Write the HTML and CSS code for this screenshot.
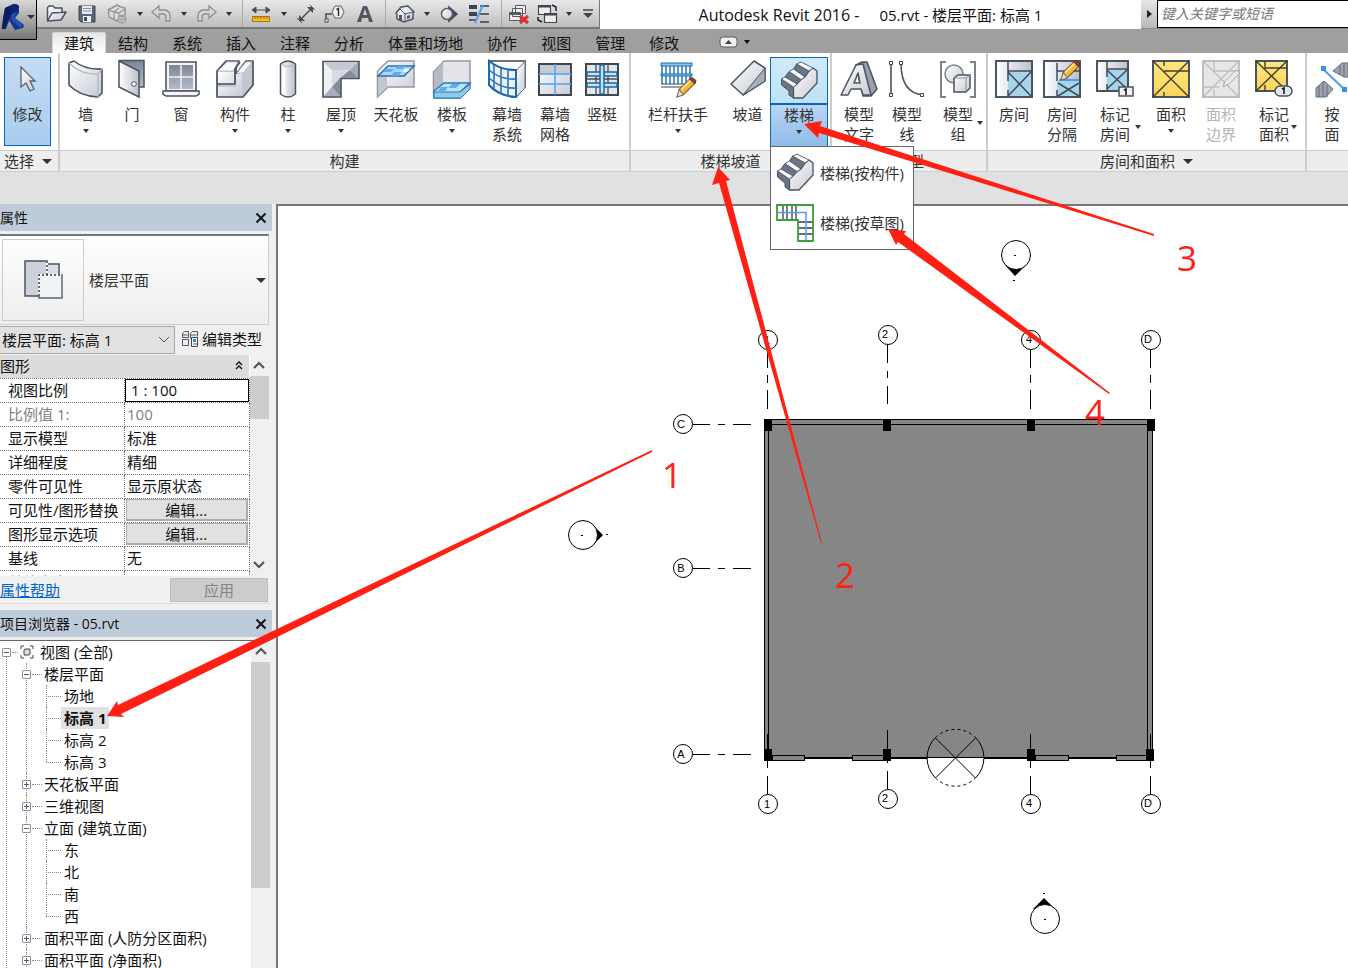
FILE: index.html
```html
<!DOCTYPE html>
<html lang="zh-CN">
<head>
<meta charset="utf-8">
<title>Autodesk Revit 2016 - 05.rvt</title>
<link rel="stylesheet" href="styles.css">
</head>
<body>
<svg class="defs" width="0" height="0" aria-hidden="true">
  <defs>
    <linearGradient id="g" x1="0" y1="0" x2="1" y2="1"><stop offset="0" stop-color="#ffffff"/><stop offset="1" stop-color="#c6cad2"/></linearGradient>
    <linearGradient id="gd" x1="0" y1="0" x2="0" y2="1"><stop offset="0" stop-color="#7d8698"/><stop offset="1" stop-color="#b4bac6"/></linearGradient>
    <linearGradient id="gl" x1="0" y1="0" x2="1" y2="0"><stop offset="0" stop-color="#ffffff"/><stop offset="1" stop-color="#bcc0ca"/></linearGradient>
    <linearGradient id="gy" x1="0" y1="0" x2="0" y2="1"><stop offset="0" stop-color="#ffe680"/><stop offset="1" stop-color="#fbd55c"/></linearGradient>
    <symbol id="stair" viewBox="0 0 40 40">
      <path d="M14.500 26l3.500-3 4-4.500 4-2.500 4-6 4-3 4 3v12L24 37h-9.500z" fill="url(#g)" stroke="#4a5361" stroke-width="1.300" stroke-linejoin="round"/>
      <path d="M2.500 18l12 8v11L10 34v-4l-7.500-6zM10 10.500l12 8-4 4.500-12-7zM17.700 3L30 10l-4 6-11.500-8z" fill="#6b7485" stroke="#4a5361" stroke-linejoin="round"/>
      <path d="M2.500 18L6 16l12 7-3.500 3zM10 10.500L14.500 8 26 16l-4 2.500zM17.700 3L22 1l12 6-4 3z" fill="#fafbfc" stroke="#5a6371" stroke-linejoin="round"/>
    </symbol>
    <symbol id="pencil" viewBox="0 0 20 20">
      <path d="M1 19l2-7L13 2l5 4L7 17z" fill="#f6b62c" stroke="#704c16"/><path d="M5 12L14 3" stroke="#ffe79a" stroke-width="2"/><path d="M13 2l2-1.500 4 3L18 6z" fill="#8d4d32" stroke="#633"/><path d="M1 19l2-7 4 5z" fill="#f3e6cf" stroke="#777"/>
    </symbol>
  </defs>
</svg>

<header class="titlebar">
  <div class="qat">
    <button class="qb" aria-label="打开"><svg width="22" height="18"><path d="M1.500 16V2.500L3 1h4l2 2h7v4M1.500 16L6 8l14-1-5 8z" fill="url(#g)" stroke="#4b5260" stroke-width="1.500" stroke-linejoin="round"/></svg></button>
    <button class="qb" aria-label="保存"><svg width="18" height="18"><path d="M1 1h16v16H3l-2-2z" fill="#59647a" stroke="#3d4556"/><path d="M4 1h10v8H4z" fill="#e8eaee"/><path d="M5 3.500h8M5 6h8" stroke="#8991a0"/><path d="M5 11h8v6H5z" fill="#f5f5f5"/><path d="M6 12h3v4H6z" fill="#3d4556"/></svg></button>
    <button class="qb" aria-label="同步"><svg width="22" height="20"><path d="M1.500 5.500L5 4l5-3 4 2 4 1v7l-4 4-4 2-8-4z" fill="#dcdcdc" stroke="#969696" stroke-width="1.500" stroke-linejoin="round"/><path d="M2 6l5 2 5-4M7 8v8M7 8l5 1 6-4M12 9v7" fill="none" stroke="#969696" stroke-width="1.300"/><circle cx="15" cy="15" r="4.500" fill="#9f9f9f"/><path d="M12 14h6M12 17h6" stroke="#ddd"/></svg></button>
    <button class="qb drop" aria-label="同步选项"><i></i></button>
    <button class="qb" aria-label="放弃"><svg width="22" height="18"><path d="M1 7l7-6v4h6q5 1 5 6v5h-4v-4q0-3-3-3H8v4z" fill="#d8d8d8" stroke="#8f8f8f" stroke-width="1.300"/></svg></button>
    <button class="qb drop" aria-label="放弃列表"><i></i></button>
    <button class="qb" aria-label="重做"><svg width="22" height="18"><path d="M20 7l-7-6v4H7q-5 1-5 6v5h4v-4q0-3 3-3h4v4z" fill="#d8d8d8" stroke="#8f8f8f" stroke-width="1.300"/></svg></button>
    <button class="qb drop" aria-label="重做列表"><i></i></button>
    <span class="sep"></span>
    <button class="qb" aria-label="测量"><svg width="20" height="18"><path d="M2 5h16M5 2L1 5l4 3zM15 2l4 3-4 3z" fill="#444c59" stroke="#444c59"/><rect x="1.500" y="11.500" width="17" height="5" fill="#f6bd2b" stroke="#a87518"/><path d="M4 12v2m3-2v2m3-2v2m3-2v2m3-2v2" stroke="#8a5c10"/></svg></button>
    <button class="qb drop" aria-label="测量选项"><i></i></button>
    <button class="qb" aria-label="尺寸标注"><svg width="20" height="20"><path d="M4 16L16 4" stroke="#444c59" stroke-width="1.500"/><path d="M3 17v-6l6 6zM17 3v6l-6-6z" fill="#444c59"/><path d="M1 14l5 5M14 1l5 5" stroke="#444c59"/></svg></button>
    <button class="qb" aria-label="标记"><svg width="22" height="18"><path d="M2 16V9h6" fill="none" stroke="#444c59" stroke-width="1.500"/><rect x="1" y="14" width="3" height="3" fill="#fff" stroke="#444c59"/><path d="M8 7l3-6h6l3 6-3 6h-6z" fill="#f2f2f2" stroke="#59616e"/><path d="M12.500 4.500l2-1V11" fill="none" stroke="#333" stroke-width="1.500"/></svg></button>
    <button class="qb" aria-label="文字"><svg width="18" height="18"><path d="M1 17L7 1h4l6 16h-4l-1-4H6l-1 4zM7 10h4L9 4z" fill="#505661"/></svg></button>
    <span class="sep"></span>
    <button class="qb" aria-label="默认三维视图"><svg width="22" height="18"><path d="M2 8l5-6 7-1 6 6-1 1v6l-9 3-7-3V9z" fill="url(#g)" stroke="#505762" stroke-width="1.500"/><path d="M2 8l4-4 5 5v8M11 9l8-2M7 2l7-1" fill="none" stroke="#505762"/><path d="M5 10h3v6l-3-1zM13 11l3-1v3l-3 1z" fill="#505762"/></svg></button>
    <button class="qb drop" aria-label="三维视图选项"><i></i></button>
    <button class="qb" aria-label="剖面"><svg width="20" height="18"><path d="M10 2l8 7-8 7z" fill="#444c59" stroke="#444c59" stroke-width="1.500"/><circle cx="8" cy="9" r="5.500" fill="url(#g)" stroke="#59616e" stroke-width="1.500"/></svg></button>
    <button class="qb" aria-label="细线"><svg width="22" height="20"><path d="M1 3h8M1 10h8" stroke="#3f4550" stroke-width="4"/><path d="M1 16h8M12 2h9M12 10h9M12 18h9" stroke="#59616e" stroke-width="2"/><path d="M7 19L15 1" stroke="#4da0f5" stroke-width="2"/></svg></button>
    <span class="sep"></span>
    <button class="qb" aria-label="关闭隐藏窗口"><svg width="22" height="22"><path d="M7.500 2.500h10v8h-10zM4.500 5.500h10v8h-10zM1.500 9.500h11v8h-11z" fill="#eee" stroke="#555d6a"/><path d="M2 11h10" stroke="#555d6a" stroke-width="2"/><path d="M12 13l8 7m0-7l-8 7" stroke="#d9302c" stroke-width="3"/></svg></button>
    <button class="qb" aria-label="切换窗口"><svg width="22" height="20"><path d="M1.500 1.500h12v9h-12zM7.500 9.500h12v9h-12z" fill="#eee" stroke="#3f4652" stroke-width="1.200"/><path d="M2 2.500h11M8 10.500h11" stroke="#3f4652" stroke-width="2"/><path d="M15 1l4 2v4M1 13v3l4 2" fill="none" stroke="#222" stroke-width="1.500"/></svg></button>
    <button class="qb drop" aria-label="窗口列表"><i></i></button>
    <button class="qb" aria-label="自定义快速访问工具栏"><svg width="12" height="12"><path d="M1 2h10" stroke="#444" stroke-width="1.500"/><path d="M1 5h10l-5 5z" fill="#444"/></svg></button>
  </div>
  <h1 class="title"><span class="app-name">Autodesk Revit 2016 -</span><span>05.rvt - 楼层平面: 标高 1</span></h1>
  <form class="search">
    <button type="button" class="search-toggle" aria-label="展开搜索"><i></i></button>
    <input type="text" placeholder="键入关键字或短语" aria-label="搜索">
  </form>
  <button class="appbtn" aria-label="应用程序菜单"><svg width="24" height="28"><path d="M4 5l8-4h3l3 2v7l-4 5 9 7-1 3-8 2-5-8-1-1-3 8H1l1-10z" fill="#15368f"/><path d="M4 5l5-2 2 8-4 6-3 9H1l1-10z" fill="#081e5c"/><path d="M11 10l6-3-4 7 9 8-3 3-9-9z" fill="#2450b4"/><path d="M9 3l6-2 3 2-1 5-6 3z" fill="#0c2672"/></svg><i></i></button>
</header>

<nav class="tabs">
  <button class="tab active">建筑</button><button class="tab">结构</button><button class="tab">系统</button><button class="tab">插入</button><button class="tab">注释</button><button class="tab">分析</button><button class="tab">体量和场地</button><button class="tab">协作</button><button class="tab">视图</button><button class="tab">管理</button><button class="tab">修改</button>
  <button class="minimize" aria-label="最小化功能区"><svg width="32" height="13"><rect x="1" y="1" width="17" height="10" rx="3" fill="#f1f1f1" stroke="#545b66"/><path d="M6 8l3.500-4L13 8z" fill="#444"/><path d="M25 4h6l-3 4z" fill="#111"/></svg></button>
</nav>

<section class="ribbon">
  <div class="group g-select">
    <div class="tools">
      <button class="tool selected"><svg class="ic" viewBox="0 0 40 40"><path d="M13 8v20l5-4 4 8 4-2-4-8h5z" fill="url(#g)" stroke="#59616e" stroke-width="1.300"/></svg><span>修改</span></button>
    </div>
    <div class="caption">选择<i></i></div>
  </div>
  <div class="group g-build">
    <div class="tools">
      <button class="tool"><svg class="ic" viewBox="0 0 40 40"><path d="M3 4l5-2q11 9 28 8v24l-4 4Q13 37 3 26z" fill="url(#g)" stroke="#4a5361" stroke-width="1.600" stroke-linejoin="round"/><path d="M3 4q12 12 29 11l4-5M32 15v23" fill="none" stroke="#b5b9c2" stroke-width="1.500"/></svg><span>墙</span><i></i></button>
      <button class="tool"><svg class="ic" viewBox="0 0 40 40"><path d="M7 1.500h25V28h-5" fill="url(#gd)" stroke="#4a5361" stroke-width="1.500"/><path d="M7 2l20 10v26L7 28z" fill="url(#gl)" stroke="#4a5361" stroke-width="1.500"/><circle cx="22" cy="25" r="2.300" fill="#fff" stroke="#4a5361"/></svg><span>门</span></button>
      <button class="tool"><svg class="ic" viewBox="0 0 40 40"><path d="M5 3h30v29H5z" fill="#f4f5f7" stroke="#4a5361" stroke-width="1.600"/><path d="M8 6h24v24H8z" fill="url(#gd)"/><path d="M20 6v24M8 18h24" stroke="#eef0f4" stroke-width="1.500"/><path d="M2 32h36v3l-3 2H5l-3-2z" fill="#f6f6f8" stroke="#4a5361" stroke-width="1.500"/></svg><span>窗</span></button>
      <button class="tool"><svg class="ic" viewBox="0 0 40 40"><path d="M2 12l9-10h13l-3 4v8h1L31 2h7v24L28 38H2z" fill="#c3c7cf" stroke="#4a5361" stroke-width="1.700" stroke-linejoin="round"/><path d="M3 13h16v11H3zM3 28h18V15h6v22H3z" fill="url(#g)"/><path d="M3 12l9-9h11l-5 9zM22 14l9-11h6l-9 11z" fill="#fafafa" stroke="#c2c6ce"/><path d="M25 3l-5 7v15H2" fill="none" stroke="#4a5361" stroke-width="1.700"/></svg><span>构件</span><i></i></button>
      <button class="tool"><svg class="ic" viewBox="0 0 40 40"><path d="M12.500 5q7.500-6 15 0v30q-7.500 6-15 0z" fill="url(#gl)" stroke="#4a5361" stroke-width="1.500"/><path d="M13 5q7 5 14 0" fill="none" stroke="#aeb3bd"/><path d="M16 9v27" stroke="#fff" stroke-width="3"/></svg><span>柱</span><i></i></button>
      <button class="tool"><svg class="ic" viewBox="0 0 40 40"><path d="M2 2.500h36v17H20V38H2z" fill="#b3b8c3" stroke="#4a5361" stroke-width="1.600"/><path d="M3 3l8 8v17l-8 9z" fill="#eef0f3"/><path d="M3 3h34l-8 8H11z" fill="#c5c9d2"/><path d="M11 28V11h18l8 8H19v18z" fill="#858d9d"/><path d="M37 4v14l-8-7z" fill="#a3aab7"/><path d="M11 28V11h18l-10 8z" fill="#d8dbe1"/><path d="M3 37l8-9 8 9z" fill="#a8aebb"/></svg><span>屋顶</span><i></i></button>
      <button class="tool"><svg class="ic" viewBox="0 0 40 40"><path d="M1.500 12L12 2h26v26H12L1.500 38z" fill="url(#g)" stroke="#9298a2" stroke-width="1.500"/><path d="M2 17l9-10v21L2 37z" fill="#c2c6ce"/><path d="M2 17L12 7h26L28 17z" fill="#a9d5f7" stroke="#2d70af" stroke-width="1.500"/><path d="M10 10h8l-3 3H7zM22 7h8l-3 3h-8zM18 13h8l-4 4h-7z" fill="#5cabf5"/><path d="M29 10h5l-3 3h-5z" fill="#eef8ff"/></svg><span>天花板</span></button>
      <button class="tool"><svg class="ic" viewBox="0 0 40 40"><path d="M1.500 32V13L12 2h26v25L28 38H2z" fill="#e2e4e9" stroke="#9298a2" stroke-width="1.500"/><path d="M2 13L11 3v22L2 33z" fill="#b4bac6"/><path d="M2 32l10-8h26L28 33v6H2z" fill="#bde3f7" stroke="#2878b6" stroke-width="1.500"/><path d="M2 33h26l10-8v5l-9 9H2z" fill="#8ccce9" stroke="#2878b6"/><path d="M9 28h7l-3 4H6zM20 25h8l-4 4h-8z" fill="#5cabf5"/></svg><span>楼板</span><i></i></button>
      <button class="tool"><svg class="ic" viewBox="0 0 40 40"><path d="M2 2h36v26l-9 10Q12 37 2 26z" fill="#fff" stroke="#3e4653" stroke-width="1.600"/><path d="M29 12l9-10v27l-9 9z" fill="url(#g)" stroke="#697180"/><path d="M2 2q11 9 27 9v27Q12 37 2 26z" fill="#eaf3fa" stroke="#1f67aa" stroke-width="2"/><path d="M7 6v26M14 9v26M21 11v26M2 11q12 10 27 9M2 19q12 11 27 10" fill="none" stroke="#2b75b8" stroke-width="1.600"/></svg><span>幕墙<br>系统</span></button>
      <button class="tool"><svg class="ic" viewBox="0 0 40 40"><path d="M4 5h32v31H4z" fill="url(#g)" stroke="#3e4653" stroke-width="2"/><path d="M5 6h30v9H5z" fill="#c7cad1"/><path d="M20 5v31M4 15h32M4 25h32" stroke="#4da3f5" stroke-width="1.500"/></svg><span>幕墙<br>网格</span></button>
      <button class="tool"><svg class="ic" viewBox="0 0 40 40"><path d="M4 5h32v31H4z" fill="#e5e6e9" stroke="#3e4653" stroke-width="2"/><path d="M14 5v31M26 5v31M4 20h32" stroke="#454d5a" stroke-width="1.300"/><path d="M5 13h30v4H5zM5 24h30v4H5z" fill="#bfe5f7" stroke="#1f67a0" stroke-width="1.500"/><path d="M18 6h4v29h-4z" fill="#bfe5f7" stroke="#1f67a0" stroke-width="1.500"/></svg><span>竖梃</span></button>
    </div>
    <div class="caption">构建</div>
  </div>
  <div class="group g-stair">
    <div class="tools">
      <button class="tool"><svg class="ic" viewBox="0 0 40 40"><path d="M3 28h30M3 25h30" stroke="#7b818b" stroke-width="1.500"/><path d="M4 7v18M8 7v18M12 7v18M16 7v18M20 7v18M24 7v18M28 7v18M32 7v18" stroke="#2a74b8" stroke-width="1.500"/><path d="M3 4h31v3H3zM3 15h31v2H3z" fill="#8bc7ee" stroke="#1d66a9"/><use href="#pencil" x="18" y="18" width="21" height="21"/></svg><span>栏杆扶手</span><i></i></button>
      <button class="tool"><svg class="ic" viewBox="0 0 40 40"><path d="M3 25L26 2l11 7v13L15 36z" fill="url(#g)" stroke="#4a5361" stroke-width="1.500" stroke-linejoin="round"/><path d="M37 9v13L15 36z" fill="#a9afba" stroke="#4a5361" stroke-linejoin="round"/></svg><span>坡道</span></button>
      <div class="split">
        <button class="split-top" aria-label="楼梯(按构件)"><svg class="ic"><use href="#stair"/></svg></button>
        <button class="split-bottom"><span>楼梯</span><i></i></button>
        <div class="menu" role="menu">
          <button role="menuitem"><svg class="ic"><use href="#stair"/></svg>楼梯(按构件)</button>
          <button role="menuitem"><svg class="ic" viewBox="0 0 40 40"><path d="M2 2h36v36H23V17H2z" fill="#fff"/><path d="M8 2v15M12 2v15M17 2v15M21 2v15M23 19h15M23 25h15M23 31h15" stroke="#333b48" stroke-width="1.300"/><path d="M3 9.500h28V37" fill="none" stroke="#4a9ef2" stroke-width="1.500"/><path d="M2 2h36v36H23V17H2z" fill="none" stroke="#3c9f34" stroke-width="1.800"/></svg>楼梯(按草图)</button>
        </div>
      </div>
    </div>
    <div class="caption">楼梯坡道</div>
  </div>
  <div class="group g-model">
    <div class="tools">
      <button class="tool"><svg class="ic" viewBox="0 0 40 40"><path d="M17 6l6-3h5l10 27-6 7h-8z" fill="#989fae" stroke="#4a5361" stroke-width="1.500" stroke-linejoin="round"/><path d="M2 36L17 6l7-1 8 31h-8l-2-6H12l-3 6zM15 24h6l-2-10z" fill="url(#g)" fill-rule="evenodd" stroke="#4a5361" stroke-width="1.500" stroke-linejoin="round"/></svg><span>模型<br>文字</span></button>
      <button class="tool"><svg class="ic" viewBox="0 0 40 40"><path d="M4 4v31M14 4q0 30 22 32" fill="none" stroke="#4a5361" stroke-width="1.600"/><path d="M2.500 2.500h3v3h-3zM2.500 34.500h3v3h-3zM12.500 2.500h3v3h-3zM33.500 34.500h3v3h-3z" fill="#fff" stroke="#3c434e"/></svg><span>模型<br>线</span></button>
      <button class="tool flyout group-tool"><svg class="ic" viewBox="0 0 40 40"><path d="M8 3H3v35h5M32 3h5v35h-5" fill="none" stroke="#7b828d" stroke-width="2"/><circle cx="16" cy="15" r="9" fill="url(#g)" stroke="#7b828d" stroke-width="1.500"/><path d="M16 19l4-3h12v13l-4 4H16z" fill="url(#g)" stroke="#4a5361" stroke-width="1.500"/><path d="M16 19h12l4-3M28 19v14" fill="none" stroke="#858c98"/></svg><span>模型<br>组</span><i></i></button>
    </div>
    <div class="caption">模型</div>
  </div>
  <div class="group g-room">
    <div class="tools">
      <button class="tool"><svg class="ic" viewBox="0 0 40 40"><path d="M2 2h36v36H2z" fill="url(#gl)" stroke="#4a5361" stroke-width="2"/><path d="M14 13h23v24H14z" fill="#a6d4e8"/><path d="M14 13l23 24M37 13L14 37M14 2v20M14 31v6M14 12h24" stroke="#3f4b59" stroke-width="1.500"/></svg><span>房间</span></button>
      <button class="tool"><svg class="ic" viewBox="0 0 40 40"><path d="M2 2h36v36H2z" fill="url(#gl)" stroke="#4a5361" stroke-width="2"/><path d="M15 22h22v15H15z" fill="#a6d4e8"/><path d="M16 24l21 13M37 24L16 37M15 4v18M15 31v6M15 12h23" stroke="#3f4b59" stroke-width="1.500"/><path d="M17 21h20" stroke="#4b9ff0" stroke-width="2"/><use href="#pencil" x="18" y="1" width="21" height="21"/></svg><span>房间<br>分隔</span></button>
      <button class="tool flyout"><svg class="ic" viewBox="0 0 40 40"><path d="M2 2h31v30H2z" fill="url(#gl)" stroke="#4a5361" stroke-width="2"/><path d="M12 11h20v20H12z" fill="#a6d4e8"/><path d="M12 11l20 19M32 11L12 30M12 2v16M12 25v6M12 10h20" stroke="#3f4b59" stroke-width="1.500"/><path d="M24 28h14v9H24z" fill="#f1f2f4" stroke="#4a5361" stroke-width="1.500"/><path d="M29 31l2-1v6" fill="none" stroke="#111" stroke-width="1.500"/></svg><span>标记<br>房间</span><i></i></button>
      <button class="tool"><svg class="ic" viewBox="0 0 40 40"><path d="M2 2h36v36H2z" fill="url(#gy)" stroke="#4a5361" stroke-width="2"/><path d="M2 2l36 36M38 2L2 38M13 2v5M13 12h25M13 33v5" stroke="#463f2c" stroke-width="1.400"/></svg><span>面积</span><i></i></button>
      <button class="tool" disabled><svg class="ic" viewBox="0 0 40 40"><path d="M2 2h36v36H2z" fill="#e7e7e7" stroke="#bebebe" stroke-width="2"/><path d="M2 2l36 36M38 2L2 38M13 2v10h25M13 30v8M2 28h16" stroke="#bdbdbd" stroke-width="1.300" fill="none"/><path d="M22 28l2-6 11-11 4 3-11 11z" fill="#e8e8e8" stroke="#aaa"/></svg><span>面积<br>边界</span></button>
      <button class="tool flyout"><svg class="ic" viewBox="0 0 40 40"><path d="M2 2h31v30H2z" fill="url(#gy)" stroke="#4a5361" stroke-width="2"/><path d="M2 2l31 30M33 2L2 32M11 2v7h22M11 26v6" fill="none" stroke="#463f2c" stroke-width="1.400"/><rect x="21" y="27" width="17" height="10" rx="5" fill="#e5e6ea" stroke="#4a5361" stroke-width="1.500"/><path d="M28 30l2-1v6" fill="none" stroke="#111" stroke-width="1.500"/></svg><span>标记<br>面积</span><i></i></button>
    </div>
    <div class="caption">房间和面积<i></i></div>
  </div>
  <div class="group g-open">
    <div class="tools">
      <button class="tool"><svg class="ic" viewBox="0 0 40 40"><path d="M4 38V29l8-7 9 8-7 8zM21 12l9-8h10v14h-8z" fill="#a0a4ad" stroke="#646b78"/><path d="M7 27v11M11 23v15M15 26v12M28 7v9M32 5v12M36 5v12" stroke="#646b78"/><path d="M11 10l21 20" stroke="#4b9ff0" stroke-width="2"/><path d="M9 7h5v5H9zM30 28h5v5h-5z" fill="#3c8bea"/></svg><span>按<br>面</span></button>
    </div>
    <div class="caption"></div>
  </div>
</section>
<div class="options"></div>

<main class="work">
  <aside class="side">
    <section class="props">
      <h2 class="pane-title">属性<button aria-label="关闭属性"><svg width="12" height="12"><path d="M1.500 1.500l9 9M10.500 1.500l-9 9" stroke="#111" stroke-width="2"/></svg></button></h2>
      <button class="type">
        <span class="thumb"><svg width="42" height="42"><path d="M3 2h22v35H3z" fill="#cdd1da" stroke="#4a5361" stroke-width="1.500"/><path d="M25 5h12v12H25z" fill="#dcdfe5" stroke="#4a5361" stroke-width="1.500"/><path d="M17 16h23v23H17z" fill="#f1f3f5" stroke="#606875" stroke-width="1.500"/><path d="M17 37V16h22M25 16V3" fill="none" stroke="#fff" stroke-width="2"/><path d="M17 37V16h22M25 16V3" fill="none" stroke="#303844" stroke-width="1.500" stroke-dasharray="2 2"/></svg></span>
        <span class="type-name">楼层平面</span><i></i>
      </button>
      <div class="instance">
        <div class="combo"><select aria-label="实例"><option>楼层平面: 标高 1</option></select><svg width="12" height="8"><path d="M1 1l5 5 5-5" fill="none" stroke="#555"/></svg></div>
        <button class="edit-type"><svg width="18" height="18"><path d="M1.500 3.500l2-2h4v6h-6zM9.500 3.500l2-2h5v5M1.500 9.500h6v6h-6zM9.500 3.500v5M1.500 5h5M9.500 5h6" fill="none" stroke="#505967"/><path d="M10.500 7.500h6v9h-6z" fill="#fff" stroke="#3f4652"/><path d="M12 9h3v3h-3z" fill="#3483d8"/><path d="M12 14h4" stroke="#555"/></svg>编辑类型</button>
      </div>
      <div class="grid-wrap">
        <table class="grid">
          <thead><tr><th colspan="2"><div class="cat">图形<svg width="8" height="10"><path d="M1 4l3-3 3 3M1 8l3-3 3 3" fill="none" stroke="#111" stroke-width="1.300"/></svg></div></th></tr></thead>
          <tbody>
            <tr><td><label for="scale">视图比例</label></td><td class="editing"><input id="scale" value="1 : 100"></td></tr>
            <tr class="off"><td>比例值 1:</td><td>100</td></tr>
            <tr><td>显示模型</td><td>标准</td></tr>
            <tr><td>详细程度</td><td>精细</td></tr>
            <tr><td>零件可见性</td><td>显示原状态</td></tr>
            <tr><td>可见性/图形替换</td><td class="cellbtn"><button>编辑...</button></td></tr>
            <tr><td>图形显示选项</td><td class="cellbtn"><button>编辑...</button></td></tr>
            <tr><td>基线</td><td>无</td></tr>
            <tr class="off"><td>基线方向</td><td>平面</td></tr>
          </tbody>
        </table>
        <div class="scroll"><svg width="12" height="8"><path d="M1 7l5-5 5 5" fill="none" stroke="#505050" stroke-width="2"/></svg><b class="knob-s"></b><svg width="12" height="8"><path d="M1 1l5 5 5-5" fill="none" stroke="#505050" stroke-width="2"/></svg></div>
      </div>
      <div class="props-foot"><a href="#">属性帮助</a><button disabled>应用</button></div>
    </section>
    <section class="browser">
      <h2 class="pane-title">项目浏览器 - 05.rvt<button aria-label="关闭项目浏览器"><svg width="12" height="12"><path d="M1.500 1.500l9 9M10.500 1.500l-9 9" stroke="#111" stroke-width="2"/></svg></button></h2>
      <div class="tree-wrap">
        <ul class="tree root">
          <li><div class="node"><b class="ex"></b><s></s><svg width="14" height="14"><path d="M4 1H1v3M10 1h3v3M1 10v3h3M13 10v3h-3" fill="none" stroke="#444"/><path d="M4 5l1-1h5v5l-1 1H4z" fill="#ddd" stroke="#444"/></svg><span class="top-label">视图 (全部)</span></div>
            <ul class="lv1">
              <li><div class="node"><b class="ex"></b><s></s><span>楼层平面</span></div>
                <ul class="lv2"><li><div class="node"><s></s><span>场地</span></div></li><li><div class="node"><s></s><span class="cur">标高 1</span></div></li><li><div class="node"><s></s><span>标高 2</span></div></li><li><div class="node"><s></s><span>标高 3</span></div></li></ul></li>
              <li><div class="node"><b class="ex plus"></b><s></s><span>天花板平面</span></div></li>
              <li><div class="node"><b class="ex plus"></b><s></s><span>三维视图</span></div></li>
              <li><div class="node"><b class="ex"></b><s></s><span>立面 (建筑立面)</span></div>
                <ul class="lv2"><li><div class="node"><s></s><span>东</span></div></li><li><div class="node"><s></s><span>北</span></div></li><li><div class="node"><s></s><span>南</span></div></li><li><div class="node"><s></s><span>西</span></div></li></ul></li>
              <li><div class="node"><b class="ex plus"></b><s></s><span>面积平面 (人防分区面积)</span></div></li>
              <li><div class="node"><b class="ex plus"></b><s></s><span>面积平面 (净面积)</span></div></li>
            </ul></li>
        </ul>
        <div class="scroll"><svg width="12" height="8"><path d="M1 7l5-5 5 5" fill="none" stroke="#505050" stroke-width="2"/></svg><b class="knob-l"></b></div>
      </div>
    </section>
  </aside>
  <div class="canvas">
    <svg class="plan" viewBox="278 206 1070 762" width="1070" height="762" role="img" aria-label="标高 1 楼层平面图">
      <g shape-rendering="crispEdges">
        <path d="M764 419h389v339H764z" fill="#868686"/>
        <path d="M764.500 758V419.500h388V758M768.500 758V424.500h379V758" fill="none" stroke="#000"/>
        <path d="M764 758h389" stroke="#000" stroke-width="2"/>
        <path d="M772.500 755.500h32v5h-32zM852.500 755.500h32v5h-32zM1035.500 755.500h33v5h-33zM1116.500 755.500h32v5h-32z" fill="#868686" stroke="#000"/>
        <path d="M764 419h8v12h-8zM883 419h8v12h-8zM1027 419h8v12h-8zM1147 419h8v12h-8zM764 749h8v12h-8zM883 749h8v12h-8zM1027 749h8v12h-8zM1146 749h8v12h-8z"/>
        <path d="M767.500 350v18m0 7v8m0 7v19M887.500 345v18m0 8v7m0 8v18M1030.500 350v18m0 7v8m0 7v19M1150.500 350v18m0 7v8m0 7v19M693 424.500h17m8 0h7m8 0h18M693 568.500h17m8 0h7m8 0h18M693 754.500h17m8 0h7m8 0h18M767.500 734v34m0 8v18M887.500 730v33m0 8v18M1030.500 734v34m0 8v18M1150.500 734v34m0 8v18" stroke="#000"/>
      </g>
      <path d="M927 758a28.500 28.500 0 0 0 57 0z" fill="#fff"/>
      <path d="M935.500 738l40 40M975.500 738l-40 40M927 757.500h57M935.500 737.500a28.500 28.500 0 0 0 0 40.500M975.500 737.500a28.500 28.500 0 0 1 0 40.500" fill="none" stroke="#000"/>
      <path d="M935.500 737.500a28.500 28.500 0 0 1 40 0M935.500 778a28.500 28.500 0 0 0 40 0" fill="none" stroke="#000" stroke-dasharray="3 3"/>
      <g fill="#fff" stroke="#000">
        <circle cx="768" cy="340" r="9.500"/><circle cx="888" cy="335" r="9.500"/><circle cx="1031" cy="340" r="9.500"/><circle cx="1151" cy="340" r="9.500"/>
        <circle cx="683" cy="424" r="9.500"/><circle cx="683" cy="568" r="9.500"/><circle cx="683" cy="754" r="9.500"/>
        <circle cx="768" cy="804" r="9.500"/><circle cx="888" cy="799" r="9.500"/><circle cx="1031" cy="804" r="9.500"/><circle cx="1151" cy="804" r="9.500"/>
      </g>
      <path d="M592 524l11 11-11 11zM1005 265l10 11 11-11zM1033 909l11-11 11 11z"/>
      <g fill="#fff" stroke="#000"><circle cx="583" cy="535" r="14.500"/><circle cx="1016" cy="255" r="14.500"/><circle cx="1045" cy="919" r="14.500"/></g>
      <path d="M581 535.500h2M606 534.500h2M1014 255.500h2M1013 280.500h2M1044 919.500h2M1043 893.500h2" stroke="#000"/>
      <g class="bubble"><text x="767" y="344">1</text><text x="885" y="338">2</text><text x="1029" y="343">4</text><text x="1148" y="343">D</text><text x="681" y="428">C</text><text x="681" y="572">B</text><text x="681" y="758">A</text><text x="767" y="808">1</text><text x="885" y="802">2</text><text x="1029" y="807">4</text><text x="1148" y="807">D</text></g>
    </svg>
  </div>
</main>

<svg class="notes" width="1348" height="968" viewBox="0 0 1348 968" aria-label="操作步骤标注">
  <g fill="#ff2013">
    <path d="M107 716l10-15 1 4L652 450v2L121 714l3 3z"/>
    <path d="M718 167l12 13-4 1 96 362h-1L719 183l-7 2z"/>
    <path d="M804 124l18-3-2 5 334 108v2L819 133l-1 5z"/>
    <path d="M888 229l18 2-2 3 206 159-1 1L898 242l-2 3z"/>
  </g>
  <g class="digits"><text x="672" y="488">1</text><text x="845" y="588">2</text><text x="1187" y="271">3</text><text x="1095" y="425">4</text></g>
</svg>
</body>
</html>
```
FILE: styles.css
```css
* { box-sizing: border-box; }
html, body { height: 100%; }
body {
  margin: 0;
  display: flex;
  flex-direction: column;
  position: relative;
  overflow: hidden;
  background: #f0f0f0;
  color: #111;
  font: 15px/20px "Open Sans", "Noto Sans CJK SC", sans-serif;
}
button, input, select { font: inherit; color: inherit; }
button { padding: 0; border: 0; background: none; }
h1, h2 { margin: 0; font-weight: 400; }
ul { list-style: none; margin: 0; padding: 0; }
.defs { position: absolute; }
i {
  display: block;
  width: 0;
  height: 0;
  border: 3px solid transparent;
  border-top: 4px solid #333;
  border-bottom: 0;
}

/* title bar */
.titlebar { display: flex; height: 29px; flex: none; position: relative; background: #fff; }
.qat {
  display: grid;
  grid-template-columns: 30px 30px 32px 12px 32px 12px 33px 12px 14px 23px 24px 20px 38px 22px 18px 22px 22px 22px 38px 6px 30px 28px 14px 24px;
  width: 600px;
  padding-left: 42px;
  background: linear-gradient(#e9e9e9, #bdbdbd);
  border-bottom: 2px solid #777;
  border-right: 1px solid #777;
}
.qb { display: grid; place-items: center; }
.sep { justify-self: center; width: 1px; height: 27px; background: #aaa; }
.title { flex: 1; display: flex; justify-content: center; align-items: center; gap: 20px; font-size: 15px; white-space: nowrap; }
.app-name { font-size: 16px; }
.search { display: flex; width: 207px; border-bottom: 1px solid #888; }
.search-toggle { width: 16px; display: grid; place-items: center; background: linear-gradient(#e6e6e6, #b8b8b8); }
.search-toggle i { border: 4px solid transparent; border-left: 5px solid #222; border-right: 0; }
.search input { flex: 1; min-width: 0; height: 28px; border: 1px solid #000; border-right: 0; padding: 0 3px 2px; background: #fff; font-size: 14px; font-style: italic; }
.search input::placeholder { color: #777; opacity: 1; }
.appbtn {
  position: absolute;
  left: 0;
  top: 0;
  z-index: 2;
  width: 37px;
  height: 40px;
  display: flex;
  align-items: center;
  gap: 2px;
  padding: 0 1px 6px;
  border: 1px solid #000;
  border-width: 0 1px 1px 0;
  background: linear-gradient(#d8d8d8, #777);
}
.appbtn i { border-width: 4px 4px 0; }

/* ribbon tabs */
.tabs { display: flex; flex: none; height: 24px; padding: 3px 0 0 52px; background: #9f9f9f; }
.tab { padding: 0 12px; white-space: nowrap; line-height: 20px; }
.tab.active { background: linear-gradient(#e6e6e6, #fff); border: 1px solid #d5d5d5; border-bottom: 0; padding: 0 11px; border-radius: 2px 2px 0 0; }
.minimize { margin-left: 28px; height: 20px; display: grid; place-items: center; }

/* ribbon */
.ribbon { display: flex; flex: none; height: 119px; background: #fff; position: relative; z-index: 2; }
.group { display: flex; flex-direction: column; border-right: 2px solid #ccc; flex: none; }
.g-select { width: 60px; }
.g-build { width: 571px; }
.g-stair { width: 201px; }
.g-model { width: 156px; }
.g-room { width: 319px; }
.g-open { flex: 1 0 41px; min-width: 0; border-right: 0; overflow: hidden; }
.tools { display: grid; flex: 1; padding-top: 4px; }
.g-select .tools { grid-template-columns: 47px; padding-left: 4px; }
.g-build .tools { grid-template-columns: 51px 42px 56px 52px 54px 52px 58px 54px 56px 40px 54px; }
.g-stair .tools { grid-template-columns: 94px 45px 58px; }
.g-model .tools { grid-template-columns: 54px 42px 60px; }
.g-room .tools { grid-template-columns: 52px 44px 62px 50px 50px 56px; }
.g-open .tools { grid-template-columns: 50px; }
.tool { display: flex; flex-direction: column; align-items: center; height: 89px; padding-top: 2px; color: #333; }
.tool.selected { padding-top: 1px; border: 1px solid #0a66c2; background: linear-gradient(#c4dcf5, #a9cdee); }
.tool:disabled { color: #b4b4b4; }
.ic { width: 40px; height: 40px; flex: none; }
.tool span { margin-top: 5px; white-space: nowrap; }
.tool i { margin-top: 5px; }
.tool.flyout { position: relative; }
.tool.flyout i { position: absolute; right: 5px; top: 63px; }
.tool.group-tool i { top: 59px; }
.caption {
  display: flex;
  align-items: center;
  justify-content: center;
  gap: 8px;
  height: 22px;
  background: #ededed;
  border-top: 1px solid #ccc;
  border-bottom: 1px solid #ccc;
  color: #333;
}
.caption i { border-width: 5px 5px 0; }
.g-select .caption { justify-content: flex-start; padding-left: 4px; }
.split { position: relative; display: flex; flex-direction: column; height: 90px; border: 1px solid #0a66c2; }
.split-top { height: 47px; display: grid; place-items: center; background: linear-gradient(#cfe9fb, #bfe2f7); border-bottom: 2px solid #0a66c2; }
.split-bottom { flex: 1; display: flex; flex-direction: column; align-items: center; gap: 5px; background: linear-gradient(#b9d6f3, #8dbbe9); color: #333; }
.menu { position: absolute; left: -1px; top: 88px; width: 144px; background: #fff; border: 1px solid #666; padding: 1px 0; z-index: 3; }
.menu button { display: flex; align-items: center; gap: 5px; width: 100%; height: 50px; padding-left: 4px; color: #333; white-space: nowrap; }
.options { flex: none; height: 32px; background: #e0e1e3; }

/* work area */
.work { flex: 1; display: flex; min-height: 0; }
.side { width: 276px; flex: none; display: flex; flex-direction: column; padding-right: 4px; }
.pane-title { display: flex; align-items: center; justify-content: space-between; height: 27px; padding-right: 5px; background: #becbd9; font-size: 14px; }
.pane-title button { display: grid; }
.props { margin-bottom: 6px; }
.type {
  display: flex;
  align-items: center;
  width: 269px;
  height: 91px;
  margin-top: 3px;
  padding: 0 2px;
  border: 1px solid #ccc;
  border-width: 2px 1px 1px 0;
  border-top-color: #777;
  background: linear-gradient(#fff, #ededed);
  color: #333;
}
.thumb { width: 82px; height: 82px; border: 1px solid #ccc; display: grid; place-items: center; }
.type-name { flex: 1; text-align: left; padding-left: 5px; }
.type i { border-width: 5px 5px 0; }
.instance { display: flex; align-items: center; gap: 6px; height: 30px; }
.combo { width: 175px; display: grid; align-items: center; }
.combo select { grid-area: 1 / 1; appearance: none; height: 28px; border: 1px solid #aaa; border-left: 0; border-radius: 0; background: #e1e1e1; padding: 0 2px; }
.combo svg { grid-area: 1 / 1; justify-self: end; margin-right: 5px; pointer-events: none; }
.edit-type { display: flex; gap: 3px; align-items: center; white-space: nowrap; padding-bottom: 3px; }
.grid-wrap { display: flex; height: 221px; overflow: hidden; width: 269px; }
.grid { width: 249px; table-layout: fixed; border-collapse: collapse; background: #fff; height: max-content; }
.grid th { width: 249px; height: 23px; padding: 0; background: #dcdcdc; font-weight: 400; }
.cat { display: flex; justify-content: space-between; align-items: center; padding-right: 6px; }
.grid td { height: 24px; padding: 0 0 0 2px; border: 1px dotted #777; white-space: nowrap; line-height: 20px; }
.grid td:first-child { padding-left: 8px; border-left: 0; width: 124px; }
.grid .off { color: #808080; }
.grid .editing { padding: 0; }
.grid input { display: block; width: 100%; height: 23px; border: 1px solid #000; padding: 0 5px; background: #fff; }
.grid .cellbtn { padding: 0 1px; }
.cellbtn button { display: block; width: 100%; height: 22px; background: #e1e1e1; border: 1px solid #adadad; border-width: 1px 2px 2px 1px; line-height: 18px; }
.scroll { flex: 1; display: flex; flex-direction: column; align-items: center; padding-top: 6px; background: #f0f0f0; }
.scroll b { width: 100%; background: #cdcdcd; }
.knob-s { height: 43px; margin: 7px 0 auto; }
.knob-l { height: 226px; margin-top: 7px; }
.grid-wrap .scroll { padding-bottom: 7px; }
.props-foot { display: flex; justify-content: space-between; align-items: center; width: 270px; height: 28px; padding-right: 2px; border-bottom: 1px solid #ddd; }
.props-foot a { color: #0066cc; }
.props-foot button { width: 98px; height: 24px; background: #ccc; border: 1px solid #bfbfbf; color: #838383; }

/* project browser */
.browser { flex: 1; display: flex; flex-direction: column; min-height: 0; }
.browser .pane-title { flex: none; }
.tree-wrap { flex: 1; min-height: 0; display: flex; margin-top: 3px; border-top: 1px solid #666; width: 270px; overflow: hidden; background: #fff; }
.tree { width: 251px; padding-left: 6px; }
.tree li { position: relative; }
.tree li::before { content: ""; position: absolute; left: 0; top: 0; height: 100%; border-left: 1px dotted #888; }
.root > li::before { top: 11px; }
.tree .lv1, .tree .lv2 { padding-left: 20px; }
.lv2 > li:last-child::before { height: 11px; }
.node { display: flex; align-items: center; height: 22px; white-space: nowrap; }
.node s { width: 10px; border-top: 1px dotted #888; }
.node span { padding: 0 3px; line-height: 22px; }
.root > li > .node s { width: 6px; margin-right: 2px; }
.root > li > .node .top-label { padding-left: 6px; }
.node .cur { background: #e1e1e1; font-weight: 700; }
.lv2 .node s { width: 15px; }
.ex { position: relative; flex: none; width: 9px; height: 9px; margin: 0 1px 0 -4px; border: 1px solid #919191; border-radius: 1px; background: linear-gradient(#3c5aa0, #3c5aa0) center / 5px 1px no-repeat #fff; }
.ex.plus { background: linear-gradient(#3c5aa0, #3c5aa0) center / 5px 1px no-repeat, linear-gradient(#3c5aa0, #3c5aa0) center / 1px 5px no-repeat #fff; }
.lv1 > li > .node span { padding-left: 2px; }
.tree-wrap .scroll { flex: none; width: 19px; }

/* drawing area */
.canvas { flex: 1; min-width: 0; overflow: hidden; border: 2px solid #777; border-width: 2px 0 0 2px; background: #fff; }
.plan { display: block; }
.bubble text { font: 11px "Liberation Sans", sans-serif; text-anchor: middle; }
.notes { position: absolute; left: 0; top: 0; z-index: 5; pointer-events: none; }
.digits text { fill: #ff2013; font: 35px "Open Sans", sans-serif; text-anchor: middle; }
```
